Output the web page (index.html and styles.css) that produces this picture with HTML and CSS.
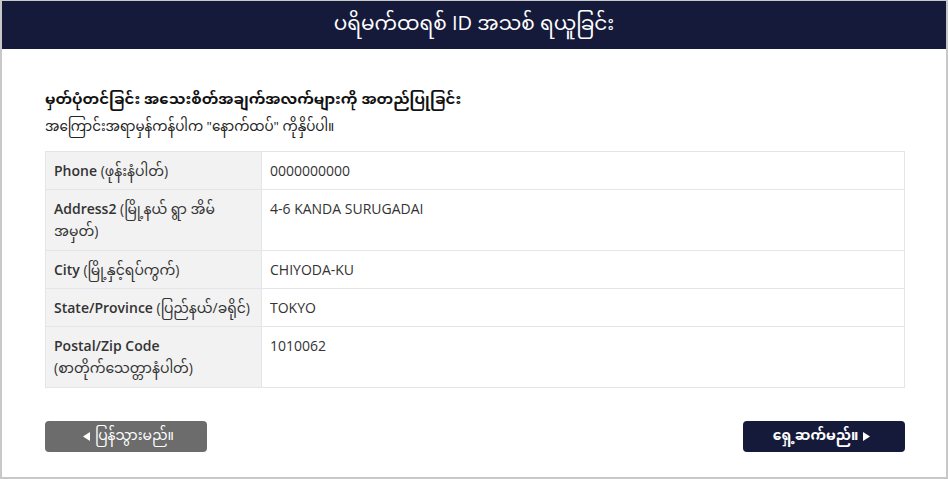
FILE: index.html
```html
<!DOCTYPE html>
<html lang="my">
<head>
    <meta charset="UTF-8">
    <meta name="viewport" content="width=device-width, initial-scale=1.0">
    <title>ပရိမက်ထရစ် ID အသစ် ရယူခြင်း</title>
    <link rel="stylesheet" href="styles.css">
</head>
<body>

    <div class="frame">
        <div class="header">ပရိမက်ထရစ် ID အသစ် ရယူခြင်း</div>

        <div class="content">
            <h2>မှတ်ပုံတင်ခြင်း အသေးစိတ်အချက်အလက်များကို အတည်ပြုခြင်း</h2>
            <p class="note">အကြောင်းအရာမှန်ကန်ပါက "နောက်ထပ်" ကိုနှိပ်ပါ။</p>

            <table class="details">
                <tr>
                    <th>Phone <span>(ဖုန်းနံပါတ်)</span></th>
                    <td>0000000000</td>
                </tr>
                <tr class="tall">
                    <th>Address2 <span>(မြို့နယ် ရွာ အိမ် အမှတ်)</span></th>
                    <td>4-6 KANDA SURUGADAI</td>
                </tr>
                <tr>
                    <th>City <span>(မြို့နှင့်ရပ်ကွက်)</span></th>
                    <td>CHIYODA-KU</td>
                </tr>
                <tr>
                    <th>State/Province <span>(ပြည်နယ်/ခရိုင်)</span></th>
                    <td>TOKYO</td>
                </tr>
                <tr class="tall">
                    <th>Postal/Zip Code <span>(စာတိုက်သေတ္တာနံပါတ်)</span></th>
                    <td>1010062</td>
                </tr>
            </table>

            <div class="actions">
                <button class="btn back"><svg class="arrow" viewBox="0 0 7 9"><path d="M7 0V9L0 4.5Z"/></svg>ပြန်သွားမည်။</button>
                <button class="btn next">ရှေ့ဆက်မည်။<svg class="arrow" viewBox="0 0 7 9"><path d="M0 0V9L7 4.5Z"/></svg></button>
            </div>
        </div>
    </div>

</body>
</html>
```
FILE: styles.css
```css
body { margin: 0; font-family: "Open Sans", "Noto Sans Myanmar", "Noto Sans", sans-serif; color: #222; background: #fff; }
.frame { width: 944px; height: 476px; border: 2px solid #c8c8c8; border-top-width: 1px; display: flex; flex-direction: column; }
.header { height: 48px; background-color: #161a3a; color: #fff; font-size: 20px; display: flex; align-items: center; justify-content: center; }
.content { padding: 0 41px 0 43px; flex: 1; display: flex; flex-direction: column; }
h2 { font-size: 15px; font-weight: bold; margin: 34px 0 0; line-height: 30px; color: #111; }
.note { font-size: 13.5px; margin: 0 0 12px; line-height: 26px; }
.details { width: 100%; border-collapse: collapse; font-size: 14px; }
.details th, .details td { border: 1px solid #e3e5e8; padding: 8px 8px; text-align: left; vertical-align: top; height: 21px; line-height: 21px; }
.details th { width: 199px; background-color: #f2f2f2; font-weight: 600; color: #333; }
.details th span { font-weight: normal; }
.details td { color: #333; }
.details tr.tall th, .details tr.tall td { height: 44px; line-height: 22px; }
.actions { display: flex; justify-content: space-between; margin-top: 33px; }
.btn { width: 162px; height: 31px; border: none; border-radius: 4px; color: #fff; font-family: inherit; font-size: 14px; cursor: pointer; display: flex; align-items: center; justify-content: center; }
.btn .arrow { width: 7px; height: 9px; fill: #fff; margin: 0 5px; }
.back { background-color: #6c6c6c; }
.next { background-color: #161a3a; font-weight: bold; }
.next:hover { background-color: #0f1230; }
```
